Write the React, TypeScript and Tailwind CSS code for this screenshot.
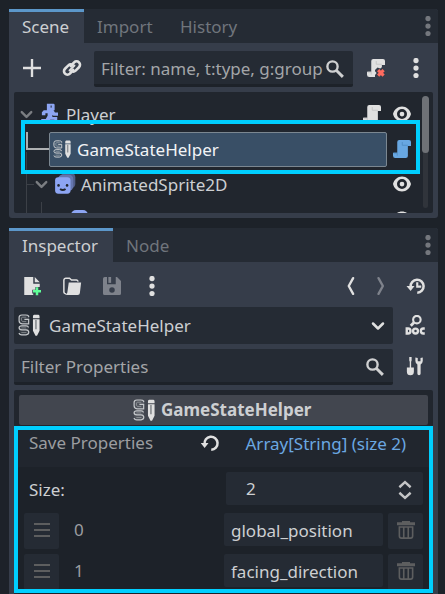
import React from "react";

type IconProps = { className?: string; size?: number };
const light = "#e0e0e0";

function Icon({ className = "", size = 20, children }: IconProps & { children: React.ReactNode }) {
  return (
    <svg className={`block shrink-0 ${className}`} width={size} height={size} viewBox="0 0 16 16" fill="none">
      {children}
    </svg>
  );
}

const Dots = ({ className = "", color = light }: { className?: string; color?: string }) => (
  <Icon className={className}>
    <circle cx="8" cy="2" r="2.1" fill={color} />
    <circle cx="8" cy="8" r="2.1" fill={color} />
    <circle cx="8" cy="14" r="2.1" fill={color} />
  </Icon>
);

const Plus = ({ className }: IconProps) => (
  <Icon className={className}>
    <path d="M7.050.8v6.250H.8v1.9h6.250v6.250h1.9V8.950h6.250V7.050H8.950V.8z" fill={light} />
  </Icon>
);

const Chain = ({ className }: IconProps) => (
  <Icon className={className}>
    <g stroke={light} strokeWidth="2.1" strokeLinecap="round">
      <path d="M7 6.400l2.700-2.900a2.750 2.750 0 0 1 3.900 3.900l-2.700 2.700a2.750 2.750 0 0 1-3.300.3" />
      <path d="M9 9.600l-2.700 2.900a2.750 2.750 0 0 1-3.900-3.900l2.700-2.700a2.750 2.750 0 0 1 3.300-.3" />
      <path d="M6 10l4-4" strokeWidth="1.500" />
    </g>
  </Icon>
);

const Search = ({ className }: IconProps) => (
  <Icon className={className}>
    <circle cx="6" cy="6" r="4.100" stroke="#cfd0d1" strokeWidth="1.900" />
    <path d="M9 9l5.300 5.300" stroke="#cfd0d1" strokeWidth="2.300" />
  </Icon>
);

const Script = ({ className, color = light, fold = "#c2c2c2" }: IconProps & { color?: string; fold?: string }) => (
  <Icon className={className}>
    <path d="M5.800.8a1.600 1.600 0 0 0-1.600 1.600v8.600H.8v2.400A1.800 1.800 0 0 0 2.600 15.200H11a1.700 1.700 0 0 0 1.700-1.700V5.500h2.500V2.400A1.600 1.600 0 0 0 13.600.8z" fill={color} />
    <path d="M8.200 2.400v2.600h4.500M1.300 11.300h2.900v2" stroke={fold} strokeWidth=".7" />
  </Icon>
);

const ScriptRemove = ({ className }: IconProps) => (
  <Icon className={className}>
    <path d="M5.800.8a1.600 1.600 0 0 0-1.600 1.600v8.600H.8v2.400A1.800 1.800 0 0 0 2.600 15.200H7.200V13.500l1.300-1.500L7.200 10.500V9.500l2-2 2.200.8 1.300-1V5.500h2.500V2.400A1.600 1.600 0 0 0 13.600.8z" fill={light} />
    <path d="M8.200 2.400v2.600h4.500M1.300 11.300h2.900v2" stroke="#c2c2c2" strokeWidth=".7" />
    <path d="M9.700 9.700l4.400 4.400m0-4.400l-4.400 4.400" stroke="#ff6b5f" strokeWidth="2.500" />
  </Icon>
);

const Eye = ({ className }: IconProps) => (
  <Icon className={className}>
    <path fillRule="evenodd" fill={light} d="M8 2C4.400 2 1.600 4.600.8 8c.8 3.400 3.600 6 7.200 6s6.400-2.600 7.200-6c-.8-3.400-3.600-6-7.200-6zm0 2a4 4 0 1 1 0 8 4 4 0 0 1 0-8zm0 2.100a1.900 1.900 0 1 0 0 3.800 1.900 1.900 0 0 0 0-3.800z" />
  </Icon>
);

const Chevron = ({ className, color = light, size }: IconProps & { color?: string }) => (
  <Icon className={className} size={size}>
    <path d="M4 6l4 4 4-4" stroke={color} strokeWidth="2" strokeLinecap="round" strokeLinejoin="round" />
  </Icon>
);

const Runner = ({ className }: IconProps) => (
  <Icon className={className}>
    <path fill="#8da5f3" d="M5.500.6h5.200a1 1 0 0 1 1 1v4.200H5.500zM3 5.800h7.800l1.200 1.800h2.400v2.600h-3.700L9.900 9.300v1.900h3.900V15h-2.300v-1.700H8.200L5.800 15H1v-2.200h3.600l1.500-2.600V8.200H4.300v1.600H1.500V7.300z" />
    <path d="M8.900 2v1.700" stroke="#21262e" strokeWidth=".8" />
  </Icon>
);

const Sprite = ({ className }: IconProps) => (
  <Icon className={className} size={22}>
    <rect x="5" y="0" width="10.500" height="11" rx="3" fill="#4f5d88" />
    <rect x="3" y="1.300" width="11" height="11.500" rx="3" fill="#6476ae" />
    <rect x=".8" y="3" width="11.200" height="12" rx="2.300" fill="#8da5f3" />
    <circle cx="3.300" cy="9" r=".95" fill="#21262e" />
    <circle cx="9.500" cy="9" r=".95" fill="#21262e" />
    <path d="M4.400 11.600q2 1.500 4 0" stroke="#21262e" strokeWidth="1.300" />
  </Icon>
);

/* Stacked G and S outlines beside a pencil */
const HelperIcon = ({ className = "", size = 20 }: IconProps) => (
  <svg className={`block shrink-0 ${className}`} width={size} height={size} viewBox="0 0 20 20" fill="none">
    <rect x="1" y="1" width="9" height="8" rx="3" fill="#bfc3c8" fillOpacity=".12" />
    <rect x="1" y="10" width="9" height="9" rx="3" fill="#bfc3c8" fillOpacity=".12" />
    <g stroke="#c5c8cb" strokeWidth="1.100">
      <path d="M9.700 3V1.900Q9 .9 7 .9H3.500Q1 .9 1 3.200v3Q1 8.700 3.700 8.900H9.700V4.900H5.800" />
      <path d="M9.500 12.300Q9.300 10.700 7.500 10.700H3.500Q1 10.700 1 12.500T3.500 14.500H7.300Q9.800 14.700 9.800 16.700T7.300 19H3.500Q1.200 19 1 17.300" />
      <path d="M7.500 2.900H4.200Q3 3 3 4.500t1.200 2.400H7.500M3 12.700H7.500M3 16.900H7.700" strokeOpacity=".5" strokeWidth=".9" />
    </g>
    <path fill={light} d="M13.600 2.300Q13.600.6 14.600.6h4q1 0 1 1.700v1.500h-6zM13.600 4.700h6v10.500L17.300 19.700h-1.400L13.600 15.200z" />
    <path d="M16.300 5.400v8.400" stroke="#8f9296" strokeWidth="1.600" />
  </svg>
);

const NewFile = ({ className }: IconProps) => (
  <Icon className={className}>
    <path fill={light} d="M1.800.8H9v5.400h5.200v2.500H10.700v2.200H8.200v3H9v1.300H1.800zM10.200.8l4 4.200h-4z" />
    <path d="M12 9v6.400M8.800 12.200h6.400" stroke="#5fff97" strokeWidth="2" />
  </Icon>
);

const Folder = ({ className }: IconProps) => (
  <Icon className={className}>
    <path d="M3.500 14.300Q1.500 14.300 1.500 12.500V3.400A1.600 1.600 0 0 1 3.100 1.800H6L7.600 3.200H11.500A1.200 1.200 0 0 1 12.700 4.500" stroke={light} strokeWidth="1.200" />
    <path fill={light} d="M5.400 5.200H15.300l-1 8.300A1.800 1.800 0 0 1 12.500 15.200H2.700Q4.100 14.500 4.300 13z" />
  </Icon>
);

const Save = ({ className }: IconProps) => (
  <Icon className={className}>
    <path fill="#7e828b" fillRule="evenodd" d="M2.200.8H4v5.700H11V.8h1l3.200 3.100V14a1.200 1.200 0 0 1-1.200 1.200H2A1.200 1.200 0 0 1 .8 14V2.200A1.400 1.400 0 0 1 2.200.8zM8 8.900a2.200 2.200 0 1 0 0 4.400 2.200 2.200 0 0 0 0-4.400z" />
    <path d="M5.100.8h2.200v4.700H5.100z" fill="#7e828b" />
  </Icon>
);

const Angle = ({ className, flip, color = light }: IconProps & { flip?: boolean; color?: string }) => (
  <Icon className={className}>
    <path d={flip ? "M6 1.700l3.500 6.300L6 14.300" : "M9.700 1.700L6.200 8l3.500 6.300"} stroke={color} strokeWidth="1.900" strokeLinecap="round" strokeLinejoin="round" />
  </Icon>
);

const History = ({ className }: IconProps) => (
  <Icon className={className}>
    <path d="M3.700 8.500A5.200 5.200 0 1 1 9 13.400" stroke={light} strokeWidth="2" />
    <path fill={light} d="M.4 8h6.400l-3.100 3.900z" />
    <path d="M9 5v3.500h3.200" stroke={light} strokeWidth="1.700" />
  </Icon>
);

const Revert = ({ className }: IconProps) => (
  <Icon className={className}>
    <path d="M3.700 9A5.200 5.200 0 1 1 9 13.400" stroke={light} strokeWidth="2" />
    <path fill={light} d="M.6 8h6.200l-3.100 4z" />
  </Icon>
);

const Doc = ({ className }: IconProps) => (
  <Icon className={className}>
    <circle cx="9.500" cy="3.700" r="3" stroke={light} strokeWidth="1.700" />
    <path d="M7.200 6L4.600 8.600" stroke={light} strokeWidth="2.200" />
    <path d="M1.400 10.800v4h1a2 2 0 0 0 0-4z" stroke={light} strokeWidth="1.900" />
    <circle cx="8.400" cy="12.800" r="1.950" stroke={light} strokeWidth="1.900" />
    <path d="M15.800 10.800h-1.100a2 2 0 0 0 0 4h1.100" stroke={light} strokeWidth="1.900" />
  </Icon>
);

const Tools = ({ className }: IconProps) => (
  <Icon className={className}>
    <path fill={light} d="M3.400.8h1.900v2.700l-.4 1v5H3.800v-5l-.4-1z" />
    <path d="M1.500 9.200h5.600V12.500a2.800 2.800 0 0 1-5.600 0z" fill={light} />
    <path fill={light} d="M8.300 1.100v2.900a3.200 3.200 0 0 0 1.600 2.700V14a1.300 1.300 0 0 0 2.600 0V6.700A3.200 3.200 0 0 0 14.200 4V1.100l-1.800.4v2.600h-2.200V1.500z" />
  </Icon>
);

const Updown = ({ className }: IconProps) => (
  <Icon className={className}>
    <path d="M3.500 5.800L8 1.700l4.500 4.100M3.500 10.200L8 14.300l4.500-4.100" stroke="#c4c5c6" strokeWidth="1.900" />
  </Icon>
);

const Grip = () => (
  <Icon>
    <path d="M1.600 3.200h12.800M1.600 8h12.800M1.600 12.800h12.800" stroke="#5d5e5f" strokeWidth="1.600" />
  </Icon>
);

const Trash = () => (
  <Icon className="ml-px">
    <path d="M4.800.8h6.400v1h4v2.400H.8V1.800h4z" fill="#5d5e5f" />
    <path d="M2.700 5.600v7.200a1.700 1.700 0 0 0 1.700 1.700h7.200a1.700 1.700 0 0 0 1.700-1.700V5.600zM6.200 5.600v8.900M9.800 5.600v8.900" stroke="#5d5e5f" strokeWidth="1.300" />
  </Icon>
);

function Tab({ label, active, className }: { label: string; active?: boolean; className: string }) {
  return (
    <div className={`h-[34px] shrink-0 border-t-[3px] pt-[3px] leading-6 ${active ? "border-[#5c97ca] bg-[#363d4a] text-[#cdcfd2]" : "border-transparent text-[#70757c]"} ${className}`}>
      {label}
    </div>
  );
}

function ArrayRow({ index, value }: { index: number; value: string }) {
  return (
    <div className="flex h-9 shrink-0">
      <div className="flex h-9 w-[35px] items-start justify-center rounded-[2px] bg-[#252b34] pl-px pt-[7px]"><Grip /></div>
      <div className="w-[165px] pl-[15px] pt-[5px] leading-6 text-[#9b9da0]">{index}</div>
      <div className="h-[33px] w-[159px] rounded-[2px] bg-[#252b34] pl-[7px] pt-[6px] leading-6 text-[#cdcfd2]">{value}</div>
      <div className="ml-[5px] flex h-9 w-[35px] items-start justify-center rounded-[2px] bg-[#252b34] pt-[7px]"><Trash /></div>
    </div>
  );
}

export default function App() {
  return (
    <div className="flex h-[594px] w-[445px] flex-col gap-[10px] overflow-hidden whitespace-nowrap bg-[#1d2229] pl-[9px] pt-[9px] font-['Noto_Sans',sans-serif] text-[17px]">
      <section className="relative flex h-[209px] w-[429px] shrink-0 flex-col rounded-[3px] bg-[#363d4a]">
        <header className="flex h-[34px] rounded-t-[3px] bg-[#252b34]">
          <Tab label="Scene" active className="w-[75px] pl-[13px]" />
          <Tab label="Import" className="w-[83px] pl-[13px]" />
          <Tab label="History" className="w-[84px] pl-[13px]" />
          <Dots className="ml-auto mt-[7px]" color="#74777d" />
        </header>
        <div className="flex h-[49px] items-start pt-2">
          <Plus className="ml-[13px] mt-[7px]" />
          <Chain className="ml-[20px] mt-[7px]" />
          <div className="ml-[12px] flex h-9 w-[259px] rounded-[2px] border-b-[3px] border-[#1d2229] bg-[#252b34] pl-[7px] pt-[6px] leading-6 text-[#a3a5a8]">
            <span className="w-[224px] overflow-hidden">Filter: name, t:type, g:group</span>
            <Search className="mt-[2px]" />
          </div>
          <ScriptRemove className="ml-[13px] mt-[7px]" />
          <Dots className="ml-[20px] mt-[7px]" />
        </div>
        <div className="relative ml-[5px] h-[121px] w-[419px] overflow-hidden rounded-[2px] bg-[#21262e] pt-[5px] leading-[35px] text-[#cdcfd2]">
          <svg className="absolute left-0 top-0" width="60" height="121" fill="none">
            <path d="M12.500 60v61M13 92.500h7M27.500 110v11" stroke="#3c4047" />
            <path d="M13 40v17h22" stroke="#aeb0b2" strokeWidth="2" />
          </svg>
          <div className="flex h-[35px] items-center">
            <Chevron className="ml-[3px]" color="#7b7e82" size={19} />
            <Runner className="ml-[4px] -mt-[3px]" />
            <span className="ml-[6px] w-[291px]">Player</span>
            <Script className="ml-[5px] -mt-[2px]" />
            <Eye className="ml-[10px] -mt-[1px]" />
          </div>
          <div className="flex h-[35px] items-center">
            <div className="relative ml-[35px] flex h-[35px] w-[338px] items-center rounded-[2px] border border-[#7b8791] bg-[#394f66] text-[#f2f4f6]">
              <HelperIcon className="ml-[3px] -mt-[2px]" size={18} />
              <span className="ml-[6px]">GameStateHelper</span>
            </div>
            <Script className="ml-[5px] -mt-[1px]" color="#68a7e2" fold="#4f8dc5" />
          </div>
          <div className="flex h-[35px] items-center">
            <Chevron className="ml-[18px]" color="#7b7e82" size={19} />
            <Sprite className="ml-[3px] -mt-[2px]" />
            <span className="ml-[5px] w-[311px]">AnimatedSprite2D</span>
            <Eye className="-mt-[1px]" />
          </div>
          <div className="flex h-[35px] pt-[7px]">
            <div className="ml-[57px] mt-[1px] h-5 w-[17px] rounded-t-[5px] bg-[#8da5f3]" />
            <Eye className="ml-[304px]" />
          </div>
          <div className="absolute left-[408px] top-[4px] h-[112px] w-[7px]">
            <div className="mx-auto h-full w-[5px] rounded-full bg-[#30343b]" />
            <div className="absolute left-0 top-0 h-[57px] w-[7px] rounded-full bg-[#6f7277]" />
          </div>
        </div>
        <div className="absolute left-3 top-[111px] h-[54px] w-[399px] border-4 border-[#00cfff]" />
      </section>

      <section className="relative flex h-[370px] w-[429px] shrink-0 flex-col rounded-t-[3px] bg-[#363d4a]">
        <header className="flex h-[34px] rounded-t-[3px] bg-[#252b34]">
          <Tab label="Inspector" active className="w-[104px] pl-[13px]" />
          <Tab label="Node" className="w-[70px] pl-[13px]" />
          <Dots className="ml-auto mt-[7px]" color="#74777d" />
        </header>
        <div className="flex h-[45px] items-start pt-[14px]">
          <NewFile className="ml-[13px]" />
          <Folder className="ml-[20px]" />
          <Save className="ml-[20px]" />
          <Dots className="ml-[20px]" />
          <Angle className="ml-[179px]" />
          <Angle className="ml-[10px]" flip color="#7e828b" />
          <History className="ml-[15px]" />
        </div>
        <div className="flex h-[42px]">
          <div className="ml-[5px] flex h-[37px] w-[379px] items-center rounded-[2px] bg-[#252b34] text-[#cdcfd2]">
            <HelperIcon className="ml-[4px] -mt-px" size={22} />
            <span className="ml-[9px] w-[319px]">GameStateHelper</span>
            <Chevron size={20} />
          </div>
          <Doc className="ml-[12px] mt-[8px]" />
        </div>
        <div className="flex h-[41px]">
          <div className="ml-[5px] flex h-9 w-[379px] rounded-[2px] border-b-[3px] border-[#1d2229] bg-[#252b34] pl-[7px] pt-[6px] leading-6 text-[#a3a5a8]">
            <span className="w-[344px]">Filter Properties</span>
            <Search className="mt-[2px]" />
          </div>
          <Tools className="ml-[12px] mt-[7px]" />
        </div>
        <div className="ml-[5px] flex min-h-0 w-[419px] grow flex-col overflow-hidden rounded-t-[2px] bg-[#21262e] pt-[5px]">
          <div className="mx-[5px] flex h-[30px] shrink-0 items-center rounded-[2px] bg-[#42464f] font-bold text-[#cdcfd2]">
            <HelperIcon className="ml-[114px]" size={22} />
            <span className="-mt-px ml-[6px]">GameStateHelper</span>
          </div>
          <div className="flex h-[42px] shrink-0 pt-[6px] leading-6">
            <span className="w-[171px] pl-[15px] text-[#9b9da0]">Save Properties</span>
            <Revert className="ml-[15px] mt-[2px]" />
            <span className="ml-[25.5px] pt-px text-[#6ba8e2]">Array[String] (size 2)</span>
          </div>
          <div className="mx-[4px] flex grow flex-col rounded-t-[2px] bg-[#1d2229] pl-[6px] pt-[5px]">
            <div className="mb-[8px] flex h-[33px] shrink-0">
              <span className="w-[202px] pl-[5px] pt-[6px] leading-6 text-[#cdcfd2]">Size:</span>
              <div className="flex h-[33px] w-[197px] rounded-[2px] bg-[#252b34] pl-[20px] pt-[5px] leading-6 text-[#cdcfd2]">
                <span className="w-[149px]">2</span>
                <Updown className="mt-[3px]" />
              </div>
            </div>
            <div className="flex flex-col gap-[5px]">
              <ArrayRow index={0} value="global_position" />
              <ArrayRow index={1} value="facing_direction" />
            </div>
          </div>
        </div>
        <div className="absolute left-[5px] top-[198px] h-[167px] w-[419px] border-4 border-[#00cfff]" />
      </section>
    </div>
  );
}
